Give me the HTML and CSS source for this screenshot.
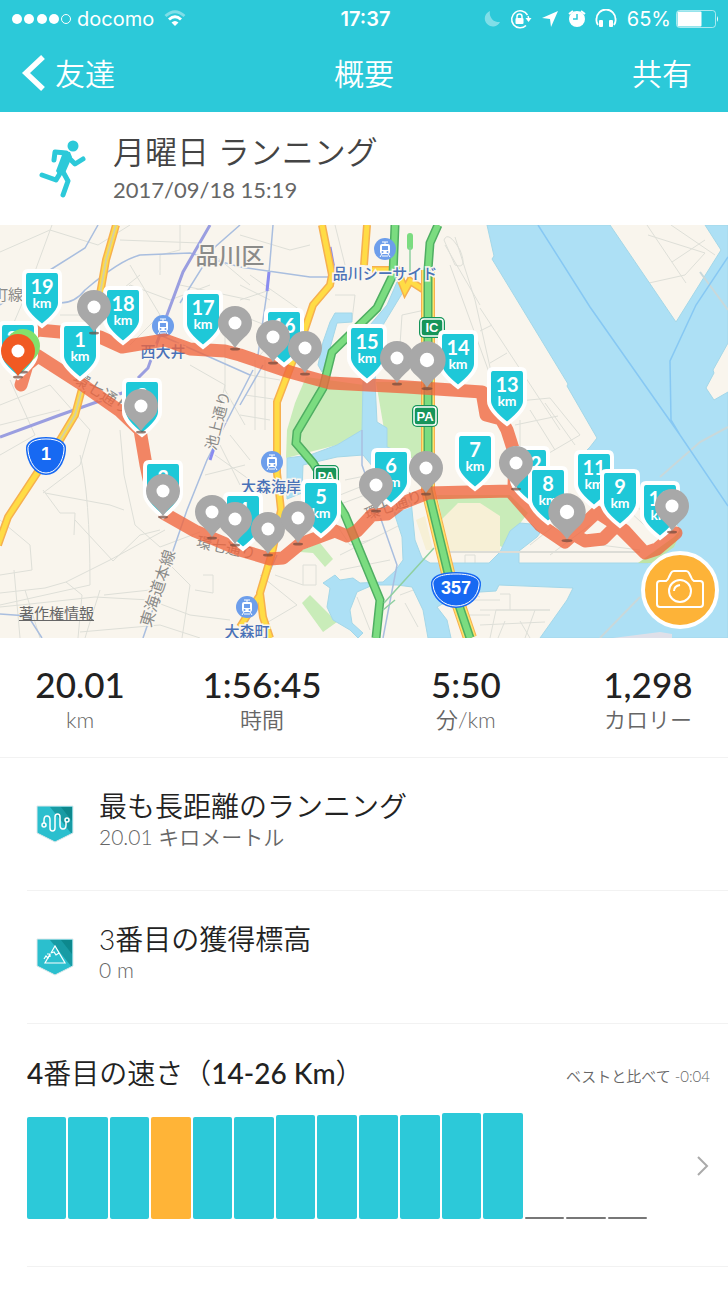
FILE: index.html
```html
<!DOCTYPE html>
<html lang="ja">
<head>
    <meta charset="UTF-8">
    <meta name="viewport" content="width=device-width, initial-scale=1.0">
    <title>概要</title>
    <link rel="stylesheet" href="styles.css">
</head>
<body>
    <header class="topbar">
        <!-- Status bar -->
        <div class="status">
            <div class="status-left">
                <svg width="60" height="12">
                    <g fill="#fff">
                        <circle cx="5" cy="6" r="5"/>
                        <circle cx="17" cy="6" r="5"/>
                        <circle cx="30" cy="6" r="5"/>
                        <circle cx="42" cy="6" r="5"/>
                    </g>
                    <circle cx="54" cy="6" r="4.5" fill="none" stroke="#fff"/>
                </svg>
                <span>docomo</span>
                <svg class="wifi" width="22" height="17" viewBox="0 0 22 17" fill="none" stroke="#fff" stroke-width="3">
                    <path d="M1.500 6Q11-2.500 20.500 6" opacity=".4"/>
                    <path d="M5 9.500Q11 4 17 9.500"/>
                    <path d="M7.500 12.500Q11 9.500 14.500 12.500L11 16Z" fill="#fff" stroke="none"/>
                </svg>
            </div>
            <div class="status-time">17:37</div>
            <div class="status-right">
                <svg width="107" height="20" viewBox="0 0 107 20">
                    <path d="M7 2A8 8 0 1 0 17 13A9 9 0 0 1 7 2Z" fill="#fff" opacity=".4"/>
                    <g transform="translate(37 10)">
                        <path d="M7.500 -4A8.500 8.500 0 1 0 6 6.500M8 -3Q9 -1 8.500 1" fill="none" stroke="#fff" stroke-width="1.500"/>
                        <path d="M5.500 -1H11.500L8.500 3Z" fill="#fff"/>
                        <path d="M-3-1V-2.500a2.500 2.500 0 0 1 5 0V-1" fill="none" stroke="#fff" stroke-width="1.500"/>
                        <rect x="-4.500" y="-1" width="8" height="6" rx="1" fill="#fff"/>
                    </g>
                    <path d="M59 9L75 2L68 18L67 10Z" fill="#fff"/>
                    <g transform="translate(94 10)">
                        <circle cy="0" r="8" fill="#fff"/>
                        <path d="M-8-5L-4-8M8-5L4-8" stroke="#fff" stroke-width="2"/>
                        <path d="M0-5V0H-4" fill="none" stroke="#2cc9d9" stroke-width="1.500"/>
                    </g>
                </svg>
                <svg class="headphones" width="22" height="20" viewBox="0 0 22 20">
                    <path d="M3 16Q1 13 1.500 10A9 9 0 0 1 20.500 10Q21 13 19 16" fill="none" stroke="#fff" stroke-width="1.800"/>
                    <rect x="4" y="11" width="4" height="7" rx="1" fill="#fff"/>
                    <rect x="14" y="11" width="4" height="7" rx="1" fill="#fff"/>
                </svg>
                <span>65%</span>
                <svg width="43" height="18" viewBox="0 0 43 18">
                    <rect x=".5" y=".5" width="39" height="17" rx="3" fill="none" stroke="#fff" opacity=".6"/>
                    <rect x="1.500" y="1.500" width="24" height="15" rx="1" fill="#fff"/>
                    <path d="M41 6q2 3 0 6Z" fill="#fff"/>
                </svg>
            </div>
        </div>
        <nav class="nav">
            <button class="nav-back">
                <svg width="24" height="38" viewBox="0 0 24 38"><path d="M22 3L5 19L22 35" fill="none" stroke="#fff" stroke-width="5.500"/></svg>
                友達
            </button>
            <h1>概要</h1>
            <button class="nav-share">共有</button>
        </nav>
    </header>

    <section class="activity">
        <svg class="runner" width="48" height="60" viewBox="0 0 48 60">
            <circle cx="34" cy="8" r="5.500" fill="#2cc9d9"/>
            <g fill="none" stroke="#2cc9d9" stroke-width="5" stroke-linecap="round" stroke-linejoin="round">
                <path d="M15 22L16 14L27 15"/>
                <path d="M28 18L36 26L44 21"/>
                <path d="M23 32L17 42L3 37"/>
                <path d="M23 32L29 43L24 57"/>
            </g>
            <path d="M19 12L31 14L33 19L26 35L19 36L17 33L23 17Z" fill="#2cc9d9"/>
        </svg>
        <div>
            <h2>月曜日 ランニング</h2>
            <p>2017/09/18 15:19</p>
        </div>
    </section>

    <section class="map">
        <svg class="map-canvas" viewBox="0 0 728 413">
            <defs>
                <g id="badge">
                    <path d="M-14 1H14Q18 1 18 6V33Q18 42 0 56Q-18 42-18 33V6Q-18 1-14 1Z" fill="#1ec8d8" stroke="#fff" stroke-width="4"/>
                </g>
                <g id="pin">
                    <ellipse cx="0" cy="26" rx="5" ry="1.500" fill="#70483c" opacity=".7"/>
                    <path d="M0 25Q-4 19-12 12A17 17 0 1 1 12 12Q4 19 0 25Z"/>
                    <circle r="6.500" fill="#fff"/>
                </g>
                <g id="station">
                    <circle r="11" fill="#6d9eeb"/>
                    <path d="M-3-7H3M0-7V-5" stroke="#fff" fill="none"/>
                    <rect x="-5" y="-5" width="10" height="10" rx="2" fill="#fff"/>
                    <rect x="-3" y="-3" width="6" height="4" fill="#6d9eeb"/>
                    <path d="M-3 5L-5 8M3 5L5 8M-3 7H3" stroke="#fff"/>
                    <circle cx="-2.500" cy="3" r="1" fill="#6d9eeb"/>
                    <circle cx="2.500" cy="3" r="1" fill="#6d9eeb"/>
                </g>
            </defs>

            <rect width="728" height="413" fill="#f9f5ed"/>

            <!-- Minor streets -->
            <g class="street">
                <path d="M0 27L50 5L98 20L130 0M52 0L30 60L0 130M120 15L200 18L250 60M130 40L160 90L130 120M180 60L250 75M140 50L90 90L60 90M180 0V25L160 30V50"/>
                <path d="M0 180L50 160L90 205L80 240L43 268M0 200L60 185M10 155L35 210L0 230M100 100L130 60L170 75L210 60M190 140L225 160L215 205M120 205L124 250L135 300L160 322L200 307"/>
                <path d="M80 230Q90 270 90 360L0 380M45 268L110 280L124 285M43 265L60 288H75L74 310M75 295L113 336L140 310L160 305M0 295L30 320L32 345L0 350M0 368L45 363L66 357L110 335L165 305"/>
                <path d="M0 382L30 379L95 372L150 375L190 390L230 395M14 345L20 413M25 365L40 413M66 357L82 370L78 413M100 365L85 413M104 370L150 365M80 407L160 400L200 413M170 340L190 360L182 413M203 350H213V368L195 365"/>
                <path d="M240 10L290 25L310 20M250 50L300 85L260 130M240 90L290 110M225 100V165L245 200M250 150L280 155M245 170L280 175M240 190L270 195M255 135V205M265 135V205M240 60L270 75M240 75L270 65M335 0L345 40M335 70H355L352 95M215 230L250 255M205 250L245 240M220 220L240 260M230 210L250 235"/>
                <path d="M400 120L402 90L425 85M445 20L480 80M450 40L490 150M455 12L475 75L498 178M460 25Q448 5 444 15L455 40Q468 45 460 25M480 83L560 205M480 106L492 100M490 138L507 128M498 178L550 173L580 210L520 245M515 200L558 191M530 185L555 225M545 178L575 220M520 195V245"/>
                <path d="M340 270L360 262M338 280L365 270M345 255L370 250M330 290L350 320L370 315M340 330L400 300M260 350L297 380L263 400M303 340H316V360H303ZM275 350L303 360M340 345L390 335M357 372L370 405M395 350L430 340M400 370L440 355L480 372M405 378L418 402M450 345H475V330H465V338M463 375H500M463 390H490"/>
                <path d="M490 413L496 385H550M480 385H550M480 400L545 397M500 369H510V385M505 396L498 413M520 396L530 413M535 385L525 413M530 320L555 300M550 330L590 300M600 320L640 325M628 285L655 310M635 280L658 300M648 10L705 28L685 50L649 58M647 0L686 58M672 37L705 15M671 0L715 30"/>
            </g>

            <!-- Parks -->
            <g fill="#c9ecb9">
                <path d="M306 152L364 160L363 205L337 220L286 233L287 205L295 178Z"/>
                <path d="M376 157H425V233H410L387 222Z"/>
                <path d="M302 325L320 318L333 334L325 342L313 328L300 327ZM302 378L310 370L337 397L323 407Z"/>
                <path d="M437 270H510L528 288L502 322L455 300L442 294Z"/>
            </g>
            <path d="M442 294L458 278H480L500 291V327H448ZM416 295L425 291L433 325H426Z" fill="#f7f0d6"/>

            <!-- Water -->
            <g fill="#ade0f5" class="water">
                <path d="M487 0L494 31L492 34L568 159L567 161L597 213L590 222L577 235L585 262L640 275L672 290L680 305L672 318L648 338H519V326L537 312L540 308L531 299L520 298L510 306L500 327L489 338H430L422 333L415 315L411 275H390L402 312L403 335L395 346L383 357L360 358L353 353L340 355L335 350L323 358L330 363L327 382L333 395L350 405L358 413L363 408L352 398L350 385L357 367L373 360L397 360L412 362L423 385L428 413H451L447 395L437 382L455 372L480 367L496 366L499 360L573 363L567 375L540 413H728V167L714 175L706 163L714 148L713 145L728 118V0H705L721 25L676 97L610 0Z"/>
                <path d="M397 57L403 67L383 100L377 133L375 157L377 197L387 203V222L400 227V275L388 260L363 230L337 232L303 240L302 268L287 274V233L310 230L337 220L362 205L363 157L370 100L387 80Z"/>
                <path d="M335 88H352V97L337 98L330 123L322 147L318 140L323 117L330 97Z"/>
            </g>
            <path d="M638 338L674 312L682 304L674 322L652 338Z" fill="#bfe4a6"/>
            <path d="M613 413L660 407L672 409V413Z" fill="#dfe0e9"/>
            <path d="M728 85L700 47M728 202L700 217L660 252M640 372L600 413" fill="none" stroke="#c9d8da" stroke-width="2"/>
            <path d="M450 327H518L640 327" fill="none" stroke="#dcdcd6" stroke-width="2"/>
            <path d="M538 0L590 82L680 210L728 281M728 32L696 80L670 136L671 195L680 210" fill="none" stroke="#87c8f3" stroke-width="1.500"/>

            <!-- Railways -->
            <g fill="none" stroke="#a9bedf" stroke-width="1.500">
                <path d="M98 0L85 23L50 45L0 80M60 78Q75 78 85 65Q120 35 140 30L190 28L240 42L310 52H332M240 0L215 22L180 78M273 0L268 60L258 130M263 140L240 180M253 145L207 235L187 285L143 413M277 330L240 413M362 205V240L397 340L383 413M0 389L28 391L42 413M160 110L250 150"/>
            </g>
            <g fill="none" stroke="#9a9ee0" stroke-width="3">
                <path d="M210 0L183 47L167 90L158 115L148 143L138 153"/>
                <path d="M0 212L60 190L125 167"/>
                <path d="M330 22L334 44M269 47L267 66M214 223L210 235" stroke="#8a8cf0"/>
            </g>

            <!-- Main roads -->
            <g class="road-edge">
                <path d="M116 0L106 35L99 75L83 160L75 190L60 215L37 248L8 292L-2 320"/>
                <path d="M322 0L332 50L330 60L313 80L303 110L290 143L277 177V248L281 285L272 328L260 368L263 392L270 413M260 370L240 402"/>
                <path d="M367 0L364 40M372 45H397L405 65L410 56L424 65"/>
            </g>
            <g class="road">
                <path d="M116 0L106 35L99 75L83 160L75 190L60 215L37 248L8 292L-2 320"/>
                <path d="M322 0L332 50L330 60L313 80L303 110L290 143L277 177V248L281 285L272 328L260 368L263 392L270 413M260 370L240 402"/>
                <path d="M367 0L364 40M372 45H397L405 65L410 56L424 65"/>
            </g>
            <path d="M116 0L106 35L99 75L83 160L75 190L60 215" fill="none" stroke="#d7d0a0" stroke-width="2"/>
            <path d="M428 45V265L448 348L470 413" fill="none" stroke="#f6b04f" stroke-width="14"/>
            <path d="M428 45V265L448 348L470 413" fill="none" stroke="#ffe16b" stroke-width="12"/>
            <g class="highway-edge">
                <path d="M395 0L393 50L377 83L332 127L323 163L297 207L296 218L313 238L345 290L380 375L376 413"/>
                <path d="M438 0L430 18L428 45V265L448 348L470 413"/>
            </g>
            <g class="highway">
                <path d="M395 0L393 50L377 83L332 127L323 163L297 207L296 218L313 238L345 290L380 375L376 413"/>
                <path d="M438 0L430 18L428 45V265L448 348L470 413"/>
                <path d="M410 11V22" stroke-linecap="round"/>
            </g>
            <path d="M410 22V50M434 323L384 378M395 375L383 385" fill="none" stroke="#8fd0a0" stroke-width="1.500"/>

            <!-- Map labels -->
            <g class="area">
                <text x="230" y="39" font-size="23" font-weight="500">品川区</text>
                <text x="8" y="75" font-size="15">町線</text>
                <text font-size="16" transform="translate(99 173) rotate(32)">環七通り</text>
                <text font-size="15" transform="translate(223 197) rotate(-76)">池上通り</text>
                <text font-size="16" transform="translate(163 365) rotate(-72)">東海道本線</text>
                <text font-size="15" transform="translate(225 328) rotate(12)">環七通り</text>
                <text font-size="15" transform="translate(395 285) rotate(-19)">環七通り</text>
            </g>
            <use href="#station" x="163" y="101"/>
            <use href="#station" x="385" y="24"/>
            <use href="#station" x="272" y="237"/>
            <use href="#station" x="247" y="382"/>
            <g class="station-name">
                <text x="163" y="132">西大井</text>
                <text x="385" y="54">品川シーサイド</text>
                <text x="271" y="267">大森海岸</text>
                <text x="247" y="412">大森町</text>
            </g>

            <!-- Road signs -->
            <g class="sign">
                <path d="M46 214C58 214 65 218 64 225C63 237 56 248 46 248C36 248 29 237 28 225C27 218 34 214 46 214Z" fill="#1769f2" stroke="#1769f2" stroke-width="4"/>
                <path d="M46 214C58 214 65 218 64 225C63 237 56 248 46 248C36 248 29 237 28 225C27 218 34 214 46 214Z" fill="#1769f2" stroke="#fff"/>
                <text x="46" y="235" font-size="18">1</text>
                <path d="M456 349C472 349 480 353 479 360C478 372 468 381 456 381C444 381 434 372 433 360C432 353 440 349 456 349Z" fill="#1769f2" stroke="#1769f2" stroke-width="4"/>
                <path d="M456 349C472 349 480 353 479 360C478 372 468 381 456 381C444 381 434 372 433 360C432 353 440 349 456 349Z" fill="#1769f2" stroke="#fff"/>
                <text x="456" y="369" font-size="18">357</text>
                <g fill="#16955a">
                    <rect x="419" y="92" width="26" height="21" rx="5"/>
                    <rect x="412" y="180" width="26" height="22" rx="5"/>
                    <rect x="313" y="240" width="26" height="22" rx="5"/>
                </g>
                <g fill="none" stroke="#fff" stroke-width="1.500">
                    <rect x="421" y="94" width="22" height="17" rx="3"/>
                    <rect x="414" y="182" width="22" height="18" rx="3"/>
                    <rect x="315" y="242" width="22" height="18" rx="3"/>
                </g>
                <text x="432" y="107" font-size="13">IC</text>
                <text x="425" y="196" font-size="13">PA</text>
                <text x="326" y="256" font-size="13">PA</text>
            </g>

            <!-- Run track -->
            <path class="track" d="M21 160L27 140L38 131L80 158L120 186L140 205L146 240L152 268L165 289L195 306L240 325L270 334L283 333L300 319L335 306L347 311L357 306L372 290L387 289L400 279L428 268L510 266L540 300L565 317L573 309L585 316L603 314L617 300L625 306L645 328L657 324L676 308L657 324L645 328L617 300L597 287L565 317L540 300L514 262L515 230L507 205L501 194L486 190L482 167L407 162L330 158L290 147L240 130L225 126L190 124L165 115L140 119L122 122L100 112L60 107L38 105L15 120"/>

            <!-- Kilometre badges -->
            <g class="km">
                <g transform="translate(18 97)"><use href="#badge"/><text y="24">20</text><text y="38" class="unit">km</text></g>
                <g transform="translate(42 45)"><use href="#badge"/><text y="24">19</text><text y="38" class="unit">km</text></g>
                <g transform="translate(123 62)"><use href="#badge"/><text y="24">18</text><text y="38" class="unit">km</text></g>
                <g transform="translate(80 98)"><use href="#badge"/><text y="24">1</text><text y="38" class="unit">km</text></g>
                <g transform="translate(203 66)"><use href="#badge"/><text y="24">17</text><text y="38" class="unit">km</text></g>
                <g transform="translate(284 84)"><use href="#badge"/><text y="24">16</text></g>
                <g transform="translate(367 100)"><use href="#badge"/><text y="24">15</text><text y="38" class="unit">km</text></g>
                <g transform="translate(458 106)"><use href="#badge"/><text y="24">14</text><text y="38" class="unit">km</text></g>
                <g transform="translate(507 143)"><use href="#badge"/><text y="24">13</text><text y="38" class="unit">km</text></g>
                <g transform="translate(142 154)"><use href="#badge"/><text y="24">2</text></g>
                <g transform="translate(163 236)"><use href="#badge"/><text y="24">3</text></g>
                <g transform="translate(243 268)"><use href="#badge"/><text y="24">4</text></g>
                <g transform="translate(321 255)"><use href="#badge"/><text y="24">5</text><text y="38" class="unit">km</text></g>
                <g transform="translate(391 224)"><use href="#badge"/><text y="24">6</text><text y="38" class="unit">km</text></g>
                <g transform="translate(475 208)"><use href="#badge"/><text y="24">7</text><text y="38" class="unit">km</text></g>
                <g transform="translate(530 222)"><use href="#badge"/><text y="24">12</text></g>
                <g transform="translate(548 242)"><use href="#badge"/><text y="24">8</text><text y="38" class="unit">km</text></g>
                <g transform="translate(594 226)"><use href="#badge"/><text y="24">11</text><text y="38" class="unit">km</text></g>
                <g transform="translate(620 245)"><use href="#badge"/><text y="24">9</text><text y="38" class="unit">km</text></g>
                <g transform="translate(660 257)"><use href="#badge"/><text y="24">10</text><text y="38" class="unit">km</text></g>
            </g>

            <!-- Pins -->
            <g fill="#a8a8a8">
                <use href="#pin" x="94" y="82"/>
                <use href="#pin" x="235" y="98"/>
                <use href="#pin" x="273" y="112"/>
                <use href="#pin" x="305" y="123"/>
                <use href="#pin" x="397" y="133"/>
                <use href="#pin" transform="translate(427 135) scale(1.1)"/>
                <use href="#pin" x="141" y="181"/>
                <use href="#pin" x="163" y="266"/>
                <use href="#pin" x="212" y="287"/>
                <use href="#pin" x="235" y="294"/>
                <use href="#pin" x="268" y="304"/>
                <use href="#pin" x="298" y="293"/>
                <use href="#pin" x="376" y="260"/>
                <use href="#pin" x="426" y="243"/>
                <use href="#pin" x="516" y="238"/>
                <use href="#pin" transform="translate(567 287) scale(1.1)"/>
                <use href="#pin" x="672" y="281"/>
            </g>
            <use href="#pin" x="23" y="121" fill="#83e06b"/>
            <use href="#pin" x="18" y="126" fill="#f15a22"/>
        </svg>
        <a class="legal" href="#">著作権情報</a>
        <button class="camera" aria-label="カメラ">
            <svg width="48" height="42" viewBox="0 0 48 42" fill="none" stroke="#fff" stroke-width="2">
                <path d="M4 12H10Q12 11 13 8L15 4Q16 2 18 2H30Q32 2 33 4L35 8Q36 11 38 12H44Q47 12 47 15V35Q47 38 44 38H4Q1 38 1 35V15Q1 12 4 12Z"/>
                <circle cx="24" cy="22" r="11"/>
                <path d="M18 22Q18 17 24 16"/>
            </svg>
        </button>
    </section>

    <section class="stats">
        <div><strong>20.01</strong><span>km</span></div>
        <div><strong>1:56:45</strong><span>時間</span></div>
        <div><strong>5:50</strong><span>分/km</span></div>
        <div><strong>1,298</strong><span>カロリー</span></div>
    </section>

    <section class="awards">
        <div class="award">
            <svg width="38" height="38" viewBox="0 0 38 38">
                <path d="M1 1H37V28L19 37L1 28Z" fill="#2bbfce" stroke="#dfe8ea"/>
                <path d="M14 2H36V28L35 28Z" fill="#189ba4"/>
                <path d="M25 2H36V16Z" fill="#0d888d"/>
                <g fill="none" stroke="#fff" stroke-width="1.500">
                    <circle cx="8" cy="20" r="2"/>
                    <path d="M8 18V15Q8 11 11 11Q14 11 14 15V23Q14 26 16.500 26Q19 26 19 23V12Q19 9 21.500 9Q24 9 24 12V20Q24 24 27 24Q30 24 30 20V17"/>
                    <circle cx="31" cy="15" r="2"/>
                </g>
            </svg>
            <div>
                <h3>最も長距離のランニング</h3>
                <p>20.01 キロメートル</p>
            </div>
        </div>
        <div class="award">
            <svg width="38" height="38" viewBox="0 0 38 38">
                <path d="M1 1H37V28L19 37L1 28Z" fill="#2bbfce" stroke="#dfe8ea"/>
                <path d="M14 2H36V28L35 28Z" fill="#189ba4"/>
                <path d="M25 2H36V16Z" fill="#0d888d"/>
                <g fill="none" stroke="#fff" stroke-width="1.200">
                    <path d="M13 18L9 25H29L19 8L15 15M15 15L18 14L20 17L23 15"/>
                    <path d="M8 21L10 18L12 20L14 16M11 16H14V19"/>
                </g>
            </svg>
            <div>
                <h3>3番目の獲得標高</h3>
                <p>0 m</p>
            </div>
        </div>
    </section>

    <section class="pace">
        <div class="pace-head">
            <h3><b>4</b>番目の速さ（<b>14-26 Km</b>）</h3>
            <span>ベストと比べて -0:04</span>
        </div>
        <div class="pace-body">
            <div class="bars">
                <i style="height: 102px"></i>
                <i style="height: 102px"></i>
                <i style="height: 102px"></i>
                <i class="current" style="height: 102px"></i>
                <i style="height: 102px"></i>
                <i style="height: 102px"></i>
                <i style="height: 104px"></i>
                <i style="height: 104px"></i>
                <i style="height: 104px"></i>
                <i style="height: 104px"></i>
                <i style="height: 106px"></i>
                <i style="height: 106px"></i>
                <i class="empty"></i>
                <i class="empty"></i>
                <i class="empty"></i>
            </div>
            <svg width="14" height="22" viewBox="0 0 14 22"><path d="M2 2L11 11L2 20" fill="none" stroke="#aaa" stroke-width="2"/></svg>
        </div>
    </section>
</body>
</html>
```
FILE: styles.css
```css
* {
    box-sizing: border-box;
}
body {
    margin: 0;
    background: #fff;
    color: #222;
    font-family: Lato, "Noto Sans CJK JP", sans-serif;
}
h1, h2, h3, p {
    margin: 0;
    font-weight: 350;
}
button {
    border: 0;
    padding: 0;
    background: none;
    color: inherit;
    font: inherit;
}
svg {
    display: block;
    flex: none;
}

/* top bar */
.topbar {
    background: #2cc9d9;
    color: #fff;
    height: 112px;
}
.status {
    display: grid;
    grid-template-columns: 1fr auto 1fr;
    align-items: center;
    height: 37px;
    padding: 0 9px 0 12px;
    font: 20px/24px Inter, sans-serif;
}
.status-left, .status-right {
    display: flex;
    align-items: center;
    gap: 5px;
}
.status-left .wifi {
    margin-left: 5px;
}
.status-right .headphones {
    margin-right: 5px;
}
.status-time {
    font-weight: 600;
}
.status-right {
    justify-content: flex-end;
}
.nav {
    display: grid;
    grid-template-columns: 1fr auto 1fr;
    align-items: center;
    height: 71px;
    padding: 0 36px 0 21px;
    font-size: 30px;
    line-height: 40px;
    font-weight: 350;
}
.nav h1 {
    font-size: 30px;
    padding-left: 15px;
}
.nav-back {
    display: flex;
    align-items: center;
    gap: 10px;
}
.nav-share {
    justify-self: end;
}

/* activity title */
.activity {
    display: flex;
    align-items: center;
    gap: 26px;
    height: 113px;
    padding: 0 0 2px 39px;
}
.activity h2 {
    font-size: 32px;
    line-height: 44px;
    color: #444;
}
.activity p {
    font-size: 22px;
    line-height: 32px;
    font-weight: 400;
    color: #666;
}

/* map */
.map {
    position: relative;
}
.map-canvas {
    width: 100%;
    overflow: hidden;
}
.street {
    fill: none;
    stroke: #dedfd8;
    stroke-width: 1;
}
.water {
    stroke: #a4d7e8;
    stroke-width: 1;
}
.road-edge {
    fill: none;
    stroke: #f6b04f;
    stroke-width: 8;
}
.road {
    fill: none;
    stroke: #ffdc45;
    stroke-width: 5;
}
.highway-edge {
    fill: none;
    stroke: #4fae62;
    stroke-width: 9;
}
.highway {
    fill: none;
    stroke: #7bdc80;
    stroke-width: 6;
}
.track {
    fill: none;
    stroke: #f0653d;
    stroke-width: 13;
    stroke-linecap: round;
    stroke-linejoin: round;
    opacity: .78;
}
.area text, .station-name text {
    text-anchor: middle;
    paint-order: stroke;
    stroke: #faf6ef;
    stroke-width: 3;
}
.area {
    fill: #8b8b89;
}
.station-name {
    fill: #4a72b8;
    font-size: 15px;
    font-weight: 500;
}
.sign text {
    fill: #fff;
    font-family: "Liberation Sans", sans-serif;
    font-weight: 700;
    text-anchor: middle;
}
.km text {
    fill: #fff;
    font-size: 20px;
    font-weight: 700;
    text-anchor: middle;
}
.km .unit {
    font-size: 14px;
}
.legal {
    position: absolute;
    left: 19px;
    bottom: 14px;
    font-size: 15px;
    line-height: 22px;
    color: #666;
}
.camera {
    position: absolute;
    right: 9px;
    bottom: 9px;
    display: flex;
    align-items: center;
    justify-content: center;
    width: 78px;
    height: 78px;
    border: 4px solid #fff;
    border-radius: 50%;
    background: #fdb338;
}

/* totals */
.stats {
    display: grid;
    grid-template-columns: 22fr 28fr 28fr 22fr;
    padding: 24px 0 23px;
    border-bottom: 1px solid #f2f2f2;
    text-align: center;
}
.stats strong {
    display: block;
    font-size: 35px;
    line-height: 44px;
    font-weight: 500;
}
.stats span {
    display: block;
    font-size: 22px;
    line-height: 28px;
    font-weight: 350;
    color: #666;
}

/* awards */
.award {
    display: flex;
    align-items: center;
    gap: 25px;
    height: 133px;
    margin-left: 27px;
    padding-left: 9px;
    border-bottom: 1px solid #f2f2f2;
}
.award div {
    padding-bottom: 8px;
}
.award h3, .pace h3 {
    font-size: 28px;
    line-height: 34px;
}
.award p {
    font-size: 21px;
    line-height: 28px;
    color: #666;
}

/* pace chart */
.pace {
    margin-left: 27px;
    padding: 32px 18px 47px 0;
    border-bottom: 1px solid #f2f2f2;
}
.pace-head {
    display: flex;
    align-items: center;
    justify-content: space-between;
}
.pace b {
    font-weight: 500;
}
.pace-head span {
    padding-top: 4px;
    font-size: 15px;
    font-weight: 350;
    color: #666;
}
.pace-body {
    display: flex;
    align-items: center;
    gap: 49px;
    margin-top: 23px;
}
.bars {
    flex: 1;
    display: flex;
    align-items: flex-end;
    gap: 2px;
}
.bars i {
    flex: 1;
    border-radius: 2px;
    background: #2cc9d9;
}
.bars .current {
    background: #ffb437;
}
.bars .empty {
    height: 2px;
    background: #777;
}
```
